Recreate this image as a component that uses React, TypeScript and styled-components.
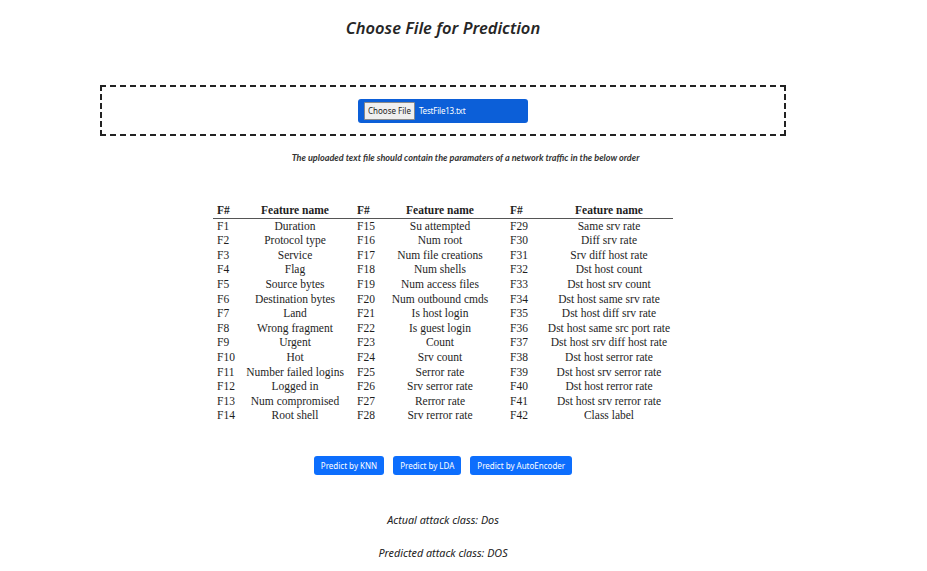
import React from "react";
import styled, { createGlobalStyle } from "styled-components";

const Global = createGlobalStyle`
  html, body { margin: 0; padding: 0; background: #fff; }
  body { font-family: "Noto Sans", "Open Sans", sans-serif; color: #222; }
`;

const Page = styled.div`
  width: 886px;
  display: flex;
  flex-direction: column;
  align-items: center;
`;

const Title = styled.h3`
  margin: 16px 0 0;
  font-size: 16.5px;
  line-height: 24px;
  font-style: italic;
  font-weight: 600;
  color: #262626;
`;

const DropZone = styled.div`
  box-sizing: border-box;
  margin-top: 45px;
  width: 686px;
  height: 51px;
  border: 2px dashed #222;
  display: flex;
  align-items: center;
  justify-content: center;
`;

const FileField = styled.div`
  box-sizing: border-box;
  width: 170px;
  height: 24px;
  background: #0c5fd8;
  border-radius: 3px;
  display: flex;
  align-items: center;
  padding-left: 6px;
  gap: 4px;
`;

const FileButton = styled.span`
  box-sizing: border-box;
  height: 18px;
  padding: 0 3px;
  background: #efefef;
  border: 1px solid #8a8a8a;
  border-radius: 1px;
  font-size: 8px;
  line-height: 16px;
  color: #222;
`;

const FileName = styled.span`
  font-size: 8px;
  letter-spacing: -0.2px;
  color: #fff;
`;

const Note = styled.p`
  margin: 16px 0 0 45px;
  font-family: Lato, "Noto Sans", sans-serif;
  font-size: 9.1px;
  line-height: 12px;
  font-style: italic;
  font-weight: 700;
  color: #333;
`;

const Table = styled.div`
  margin-top: 39px;
  display: grid;
  grid-template-columns: 30px 104px 36px 114px 48px 128px;
  font-family: "Liberation Serif", "DejaVu Serif", serif;
  font-size: 11.5px;
  line-height: 14.6px;
  color: #1e1e1e;
`;

const HeadCell = styled.div<{ $num?: boolean; $pad?: number }>`
  font-weight: 700;
  text-align: ${(p) => (p.$num ? "left" : "center")};
  padding-left: ${(p) => (p.$num ? p.$pad ?? 4 : 0)}px;
  border-bottom: 1px solid #555;
`;

const Cell = styled.div<{ $num?: boolean; $pad?: number }>`
  text-align: ${(p) => (p.$num ? "left" : "center")};
  padding-left: ${(p) => (p.$num ? p.$pad ?? 4 : 0)}px;
  white-space: nowrap;
`;

const Buttons = styled.div`
  margin-top: 33px;
  display: flex;
  gap: 9px;
`;

const Button = styled.button`
  height: 19px;
  padding: 0 7px;
  border: none;
  border-radius: 3px;
  background: #0d6efd;
  color: #fff;
  font-family: "Noto Sans", sans-serif;
  font-size: 8px;
  cursor: pointer;
`;

const Result = styled.p<{ $top: number }>`
  margin: ${(p) => p.$top}px 0 0;
  font-size: 10.8px;
  line-height: 14px;
  font-style: italic;
  color: #222;
`;

const features = [
  "Duration", "Protocol type", "Service", "Flag", "Source bytes", "Destination bytes", "Land",
  "Wrong fragment", "Urgent", "Hot", "Number failed logins", "Logged in", "Num compromised", "Root shell",
  "Su attempted", "Num root", "Num file creations", "Num shells", "Num access files", "Num outbound cmds",
  "Is host login", "Is guest login", "Count", "Srv count", "Serror rate", "Srv serror rate", "Rerror rate",
  "Srv rerror rate", "Same srv rate", "Diff srv rate", "Srv diff host rate", "Dst host count",
  "Dst host srv count", "Dst host same srv rate", "Dst host diff srv rate", "Dst host same src port rate",
  "Dst host srv diff host rate", "Dst host serror rate", "Dst host srv serror rate", "Dst host rerror rate",
  "Dst host srv rerror rate", "Class label",
];

const pads = [4, 10, 13];

export default function App() {
  const rows = Array.from({ length: 14 }, (_, i) => i);
  return (
    <>
      <Global />
      <Page>
        <Title>Choose File for Prediction</Title>
        <DropZone>
          <FileField>
            <FileButton>Choose File</FileButton>
            <FileName>TestFile13.txt</FileName>
          </FileField>
        </DropZone>
        <Note>The uploaded text file should contain the paramaters of a network traffic in the below order</Note>
        <Table>
          {[0, 1, 2].map((g) => (
            <React.Fragment key={"h" + g}>
              <HeadCell $num $pad={pads[g]}>F#</HeadCell>
              <HeadCell>Feature name</HeadCell>
            </React.Fragment>
          ))}
          {rows.map((r) =>
            [0, 1, 2].map((g) => {
              const idx = g * 14 + r;
              return (
                <React.Fragment key={idx}>
                  <Cell $num $pad={pads[g]}>F{idx + 1}</Cell>
                  <Cell>{features[idx]}</Cell>
                </React.Fragment>
              );
            })
          )}
        </Table>
        <Buttons>
          <Button>Predict by KNN</Button>
          <Button>Predict by LDA</Button>
          <Button>Predict by AutoEncoder</Button>
        </Buttons>
        <Result $top={38}>Actual attack class: Dos</Result>
        <Result $top={19}>Predicted attack class: DOS</Result>
      </Page>
    </>
  );
}
